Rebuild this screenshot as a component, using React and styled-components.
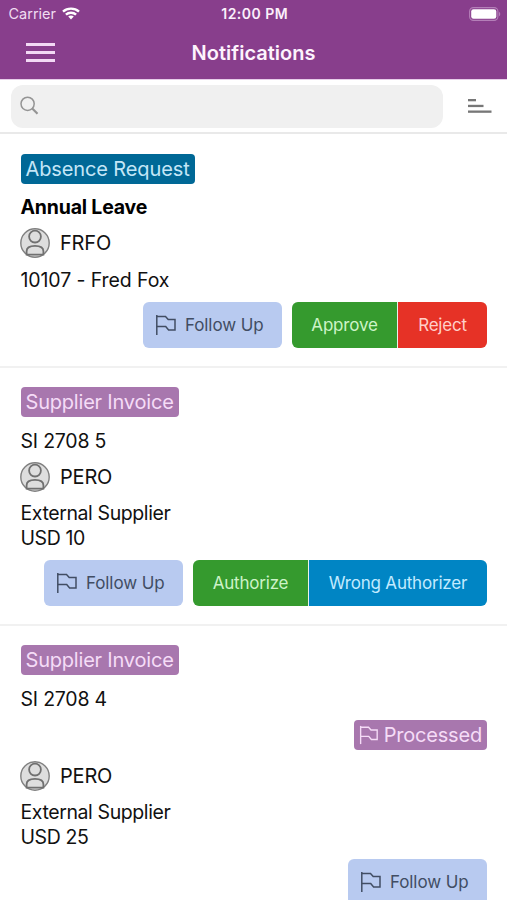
import React from 'react';
import styled, { createGlobalStyle } from 'styled-components';

const GlobalStyle = createGlobalStyle`
  * {
    box-sizing: border-box;
  }

  body {
    margin: 0;
    background: #fff;
    color: #111;
    font-family: Inter, "Liberation Sans", sans-serif;
  }
`;

const Screen = styled.div`
  width: 507px;
  height: 900px;
  overflow: hidden;
  background: #fff;
`;

const Header = styled.header`
  height: 79px;
  background: #883e8c;
  color: #fff;
`;

const StatusBar = styled.div`
  display: grid;
  grid-template-columns: 1fr auto 1fr;
  align-items: center;
  height: 27px;
  padding: 0 6px 0 8.5px;
`;

const Carrier = styled.div`
  display: flex;
  align-items: center;
  gap: 6px;
  font-size: 14.5px;
  color: #f0dcf1;
`;

const Clock = styled.div`
  font-size: 14px;
  font-weight: 600;
  letter-spacing: 0.5px;
  color: #fbeffb;
`;

const Battery = styled.div`
  display: flex;
  justify-content: flex-end;
`;

const NavBar = styled.div`
  display: grid;
  grid-template-columns: 1fr auto 1fr;
  align-items: center;
  height: 51px;
  padding: 0 26px;
`;

const MenuButton = styled.button`
  display: flex;
  flex-direction: column;
  gap: 5px;
  width: 29px;
  padding: 0;
  border: none;
  background: none;
  cursor: pointer;
`;

const MenuLine = styled.span`
  height: 3px;
  background: #f3d9f5;
`;

const PageTitle = styled.h1`
  margin: 0;
  font-size: 20px;
  font-weight: 600;
  color: #fdf3fd;
`;

const Toolbar = styled.div`
  display: flex;
  align-items: center;
  justify-content: space-between;
  height: 55px;
  padding: 0 15px 0 11px;
  border-top: 1px solid #e7cde9;
  border-bottom: 2px solid #e9e9e9;
`;

const SearchField = styled.label`
  display: flex;
  align-items: center;
  width: 432px;
  height: 43px;
  padding: 0 9px;
  border-radius: 12px;
  background: #f0f0f0;
`;

const SearchInput = styled.input`
  flex: 1;
  border: none;
  outline: none;
  background: transparent;
  font-size: 18px;
`;

const Card = styled.article`
  padding: 19.5px 20px 18px;
  border-bottom: 2px solid #f1f1f1;
`;

const Tag = styled.div`
  display: flex;
  align-items: center;
  gap: 5px;
  width: fit-content;
  height: 30px;
  margin-left: 0.5px;
  padding: 0 5px;
  border-radius: 4px;
  background: ${(props) => (props.$kind === 'absence' ? '#006896' : '#a877ae')};
  color: ${(props) => (props.$kind === 'absence' ? '#c4e6f7' : '#f5dcf7')};
  font-size: 20px;
  letter-spacing: ${(props) => (props.$kind === 'absence' ? '-0.12px' : '-0.2px')};
  white-space: nowrap;
`;

const StatusRow = styled.div`
  display: flex;
  justify-content: flex-end;
  margin-top: 9px;
`;

const Title = styled.div`
  margin-top: 11.5px;
  padding-left: 0.5px;
  font-size: 19.5px;
  font-weight: ${(props) => (props.$bold ? 700 : 400)};
  letter-spacing: -0.2px;
  line-height: 24.5px;
  color: ${(props) => (props.$bold ? '#000' : 'inherit')};
`;

const Person = styled.div`
  display: flex;
  align-items: center;
  gap: 10px;
  height: 30px;
  margin-top: ${(props) => (props.$spaced ? '10.5px' : '8.5px')};
  font-size: 20px;
  letter-spacing: -0.2px;
`;

const Details = styled.div`
  margin-top: 9.5px;
  padding-left: 0.5px;
  font-size: 19.5px;
  letter-spacing: ${(props) => (props.$kind === 'absence' ? '-0.1px' : '-0.4px')};
  line-height: 24.5px;
`;

const Actions = styled.div`
  display: flex;
  justify-content: flex-end;
  gap: 10px;
  margin-top: 9.5px;
`;

const FollowButton = styled.button`
  display: flex;
  align-items: center;
  gap: 8px;
  width: 139px;
  height: 46px;
  padding: 0 0 0 12px;
  border: none;
  border-radius: 6px;
  background: #b8caf0;
  color: #414d63;
  font-family: inherit;
  font-size: 17px;
  letter-spacing: -0.1px;
  cursor: pointer;
`;

const ButtonGroup = styled.div`
  display: flex;
  gap: 1px;
  border-radius: 6px;
  overflow: hidden;
  background: #e8f3ea;
`;

const tones = {
  green: { background: '#359a2e', text: '#cdf3c8' },
  red: { background: '#e63226', text: '#ffd0c8' },
  blue: { background: '#0085c4', text: '#c2ebff' },
};

const ActionButton = styled.button`
  width: ${(props) => props.$width}px;
  height: 46px;
  padding: 0;
  border: none;
  background: ${(props) => tones[props.$tone].background};
  color: ${(props) => tones[props.$tone].text};
  font-family: inherit;
  font-size: 17px;
  letter-spacing: -0.2px;
  cursor: pointer;
`;

const WifiIcon = () => (
  <svg width="18" height="13" viewBox="0 0 18 13" fill="none" stroke="#fff" strokeWidth="2.4">
    <path d="M1 4.6C5.4.6 12.6.6 17 4.6" />
    <path d="M3.9 7.7c2.8-2.6 7.4-2.6 10.2 0" />
    <path d="M6.2 9.5c1.6-1.4 4-1.4 5.6 0L9 12.5z" fill="#fff" stroke="none" />
  </svg>
);

const BatteryIcon = () => (
  <svg width="32" height="14" viewBox="0 0 32 14">
    <rect x="0.6" y="0.6" width="28.3" height="12.8" rx="3.8" fill="none" stroke="#b47fb8" strokeWidth="1.1" />
    <rect x="2.2" y="2.2" width="25.1" height="9.6" rx="2.3" fill="#fff" />
    <path d="M30 4.7c1.7.8 1.700 3.8 0 4.6z" fill="#b47fb8" />
  </svg>
);

const SearchIcon = () => (
  <svg width="20" height="20" viewBox="0 0 20 20" fill="none" stroke="#949494">
    <circle cx="7.6" cy="7.800" r="6.600" strokeWidth="1.500" />
    <path d="M12.300 12.500l5.200 5.200" strokeWidth="2.200" />
  </svg>
);

const SortIcon = () => (
  <svg width="24" height="16" viewBox="0 0 24 16" fill="#777">
    <rect x="0" y="1" width="8" height="2.300" />
    <rect x="0" y="6.800" width="15.500" height="2.300" />
    <rect x="0" y="12.500" width="23.500" height="2.300" />
  </svg>
);

const FlagIcon = ({ size = 22 }) => (
  <svg width={size} height={size} viewBox="0 0 22 22" fill="none" stroke="currentColor" strokeWidth="1.5">
    <path d="M1.8 1v20" />
    <path d="M1.8 2.5h8.700l2.700 3h6.800v10.500h-6.400l-2.900-3.500H1.800" />
  </svg>
);

const AvatarIcon = () => (
  <svg width="30" height="30" viewBox="0 0 30 30" fill="none" stroke="#707070" strokeWidth="1.800">
    <circle cx="15" cy="15" r="14.200" fill="#dedede" stroke="#808080" strokeWidth="1.400" />
    <circle cx="15" cy="8.600" r="5.900" />
    <path d="M6.600 26.700v-3.400c0-3.700 3.800-5.400 8.400-5.400s8.400 1.700 8.400 5.400v3.400z" />
  </svg>
);

const notifications = [
  {
    id: 1,
    kind: 'absence',
    label: 'Absence Request',
    title: 'Annual Leave',
    bold: true,
    person: 'FRFO',
    details: ['10107 - Fred Fox'],
    actions: [
      { label: 'Approve', tone: 'green', width: 105 },
      { label: 'Reject', tone: 'red', width: 89 },
    ],
  },
  {
    id: 2,
    kind: 'invoice',
    label: 'Supplier Invoice',
    title: 'SI 2708 5',
    person: 'PERO',
    details: ['External Supplier', 'USD 10'],
    actions: [
      { label: 'Authorize', tone: 'green', width: 115 },
      { label: 'Wrong Authorizer', tone: 'blue', width: 178 },
    ],
  },
  {
    id: 3,
    kind: 'invoice',
    label: 'Supplier Invoice',
    title: 'SI 2708 4',
    status: 'Processed',
    person: 'PERO',
    details: ['External Supplier', 'USD 25'],
    actions: [],
  },
];

const Notification = ({ item }) => (
  <Card>
    <Tag $kind={item.kind}>{item.label}</Tag>
    <Title $bold={item.bold}>{item.title}</Title>
    {item.status && (
      <StatusRow>
        <Tag $kind={item.kind}>
          <FlagIcon size={20} />
          {item.status}
        </Tag>
      </StatusRow>
    )}
    <Person $spaced={Boolean(item.status)}>
      <AvatarIcon />
      {item.person}
    </Person>
    <Details $kind={item.kind}>
      {item.details.map((line) => (
        <div key={line}>{line}</div>
      ))}
    </Details>
    <Actions>
      <FollowButton>
        <FlagIcon />
        Follow Up
      </FollowButton>
      {item.actions.length > 0 && (
        <ButtonGroup>
          {item.actions.map((action) => (
            <ActionButton key={action.label} $tone={action.tone} $width={action.width}>
              {action.label}
            </ActionButton>
          ))}
        </ButtonGroup>
      )}
    </Actions>
  </Card>
);

const App = () => {
  return (
    <Screen>
      <GlobalStyle />
      <Header>
        <StatusBar>
          <Carrier>
            Carrier
            <WifiIcon />
          </Carrier>
          <Clock>12:00 PM</Clock>
          <Battery>
            <BatteryIcon />
          </Battery>
        </StatusBar>
        <NavBar>
          <MenuButton aria-label="Menu">
            <MenuLine />
            <MenuLine />
            <MenuLine />
          </MenuButton>
          <PageTitle>Notifications</PageTitle>
        </NavBar>
      </Header>
      <Toolbar>
        <SearchField>
          <SearchIcon />
          <SearchInput type="text" aria-label="Search" />
        </SearchField>
        <SortIcon />
      </Toolbar>
      {notifications.map((item) => (
        <Notification key={item.id} item={item} />
      ))}
    </Screen>
  );
};

export default App;
